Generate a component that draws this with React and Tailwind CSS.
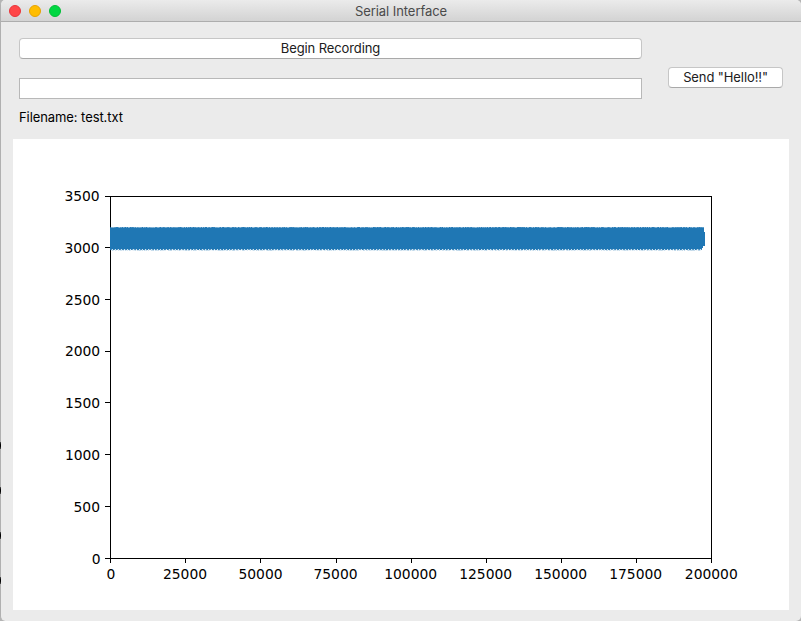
const X_TICKS = [
  { value: 0, label: 98 },
  { value: 25000, label: 172 },
  { value: 50000, label: 247.5 },
  { value: 75000, label: 322.5 },
  { value: 100000, label: 397.7 },
  { value: 125000, label: 472.7 },
  { value: 150000, label: 547.7 },
  { value: 175000, label: 622.7 },
  { value: 200000, label: 698.3 },
];
const Y_TICKS = [
  { value: 0, label: 424.5, right: 87.5 },
  { value: 500, label: 372.5, right: 87 },
  { value: 1000, label: 321, right: 87.2 },
  { value: 1500, label: 269, right: 87.2 },
  { value: 2000, label: 217, right: 87.2 },
  { value: 2500, label: 166, right: 87.2 },
  { value: 3000, label: 114, right: 86.7 },
  { value: 3500, label: 62, right: 86.7 },
];
const LEFT = 97.5;
const RIGHT = 698.5;
const TOP = 57.5;
const BOTTOM = 419.5;

const xPos = (v) => Math.round(LEFT + (v / 200000) * (RIGHT - LEFT) - 0.35) + 0.5;
const yPos = (v) => Math.round(BOTTOM - (v / 3500) * (BOTTOM - TOP) - 1) + 0.5;

// Deterministic jitter for the sampled signal's upper and lower edges.
const noise = (i) => {
  const s = Math.sin(i * 127.1 + 11.7) * 43758.5453;
  return s - Math.floor(s);
};

function Signal() {
  const edges = [];
  for (let x = 97; x < 691; x++) {
    edges.push(<rect key={"t" + x} x={x} y="88" width="1" height="1" opacity={0.5 + 0.5 * noise(x)} />);
    if (x < 689) {
      edges.push(
        <rect
          key={"b" + x}
          x={x}
          y="110"
          width="1"
          height="1"
          opacity={x % 3 === 0 ? 0.2 : 0.7 + 0.3 * noise(x + 900)}
        />,
        <rect key={"l" + x} x={x} y="111" width="1" height="1" opacity={0.3 * noise(x + 2000)} />
      );
    }
  }
  return (
    <g fill="#1f77b4" shapeRendering="crispEdges">
      <path d="M97 89H691V93H692V107H690V109H689V110H97Z" />
      {edges}
    </g>
  );
}

function Plot() {
  return (
    <svg
      width="776"
      height="471"
      viewBox="0 0 776 471"
      className="block font-['DejaVu_Sans',sans-serif] text-[13.89px]"
    >
      <g stroke="#000" strokeWidth="1" fill="none" shapeRendering="crispEdges">
        <rect x={LEFT} y={TOP} width={RIGHT - LEFT} height={BOTTOM - TOP} />
        {X_TICKS.map(({ value }) => (
          <path key={value} d={`M${xPos(value)} 420v4`} />
        ))}
        {Y_TICKS.map(({ value }) => (
          <path key={value} d={`M92 ${yPos(value)}h5`} />
        ))}
      </g>
      <Signal />
      {X_TICKS.map(({ value, label }) => (
        <text key={value} x={label} y="440" textAnchor="middle">
          {value}
        </text>
      ))}
      {Y_TICKS.map(({ value, label, right }) => (
        <text key={value} x={right} y={label} textAnchor="end">
          {value}
        </text>
      ))}
    </svg>
  );
}

// Sliver of the window behind, visible along the left edge.
function BackgroundSliver() {
  return (
    <div className="absolute left-0 top-[442px] flex w-px flex-col gap-[38px]">
      {[0, 1, 2, 3].map((i) => (
        <span key={i} className="h-[7px] bg-linear-to-b from-[#555] via-black to-[#555]" />
      ))}
    </div>
  );
}

const BUTTON =
  "flex h-[21px] items-center justify-center rounded-[4px] border border-[#c6c6c6] border-b-[#a9a9a9] bg-white text-[13px] tracking-[-0.1px] text-[#202020]";

export default function App() {
  return (
    <div className="relative h-[621px] w-[801px] overflow-hidden bg-[#b4b4b4] font-[Inter,sans-serif]">
      <div className="flex h-full flex-col overflow-hidden rounded-[5px] border-l border-[#b0b0b0] bg-[#ebebeb]">
        <header className="grid h-[22px] shrink-0 grid-cols-[1fr_auto_1fr] items-center border-b border-[#adadad] bg-linear-to-b from-[#ebebeb] to-[#d3d3d3] text-[13px] text-[#4a4a4a]">
          <div className="flex gap-2 pl-2 pt-px">
            <span className="size-3 rounded-full border border-[#e8343a] bg-[#ff4648]" />
            <span className="size-3 rounded-full border border-[#e6a200] bg-[#ffbd00]" />
            <span className="size-3 rounded-full border border-[#00bd36] bg-[#00d742]" />
          </div>
          <h1 className="pt-0.5 leading-[19px] tracking-[-0.06px]">Serial Interface</h1>
        </header>
        <section className="flex h-[117px] shrink-0 items-start pl-[18px] pt-4">
          <div className="flex w-[623px] flex-col">
            <button className={BUTTON}>Begin Recording</button>
            <input className="mt-[19px] h-[21px] border border-[#b8b8b8] bg-white px-1 text-[13px] outline-none" />
            <p className="mt-2 text-[13px] leading-5 tracking-[-0.08px] text-black">Filename: test.txt</p>
          </div>
          <button className={BUTTON + " ml-[26px] mt-[29px] w-[115px]"}>Send "Hello!!"</button>
        </section>
        <main className="ml-3 h-[471px] w-[776px] bg-white">
          <Plot />
        </main>
      </div>
      <BackgroundSliver />
    </div>
  );
}
